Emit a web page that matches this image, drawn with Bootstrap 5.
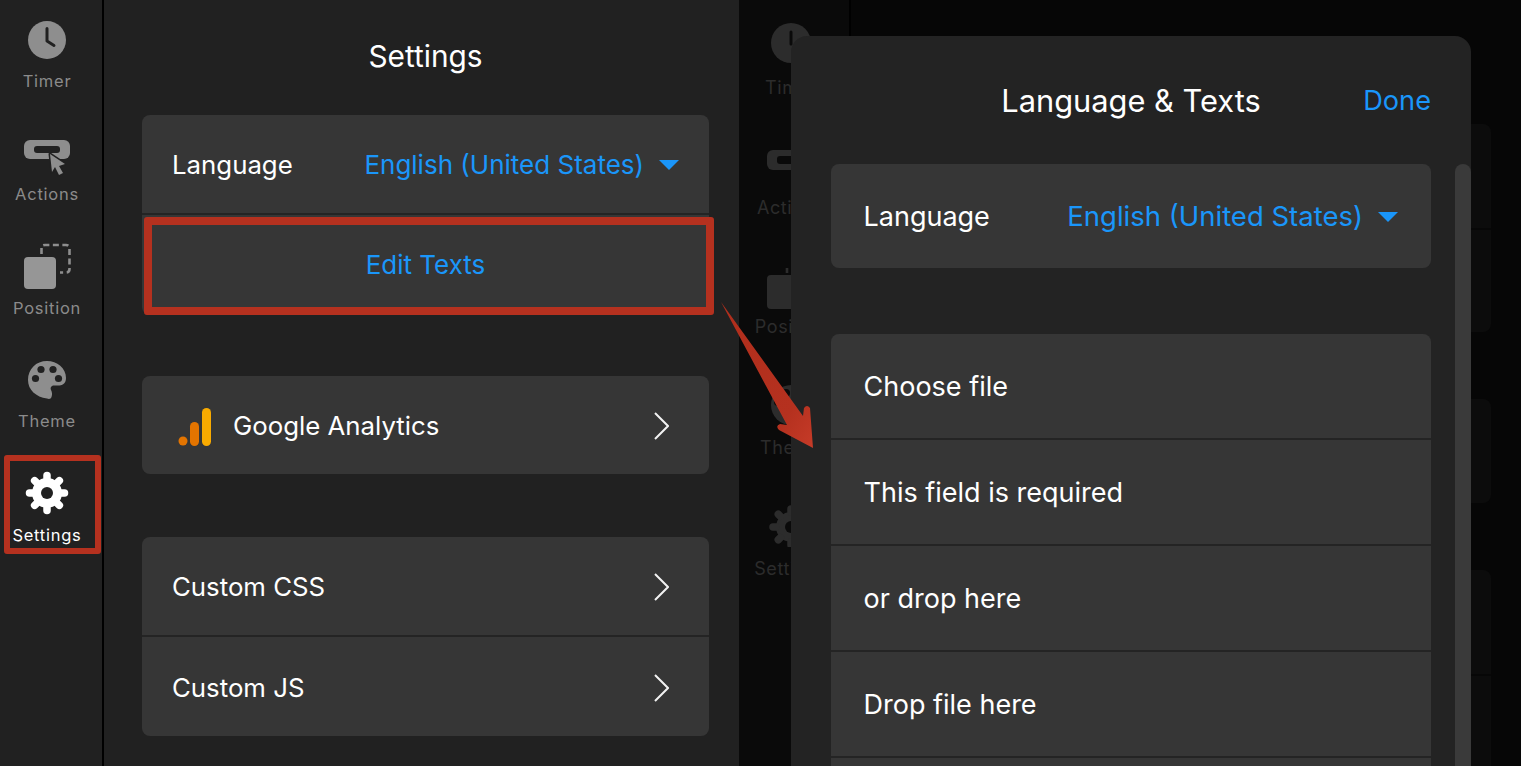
<!DOCTYPE html>
<html lang="en">
<head>
<meta charset="utf-8">
<title>Language &amp; Texts</title>
<link href="https://cdn.jsdelivr.net/npm/bootstrap@5.3.0/dist/css/bootstrap.min.css" rel="stylesheet">
<style>
html,body{height:100%;margin:0;background:#0a0a0a;overflow:hidden}
body{font-family:Inter,"Liberation Sans",sans-serif;color:#fff}
.sk-root{position:relative;width:1521px;height:766px;overflow:hidden}
.sk-rail{width:104px;height:766px;background:#212121;border-right:2px solid #000;flex:none;padding-right:8px}
.sk-item{height:113.5px;color:#8b8b8b;font-size:16.5px;letter-spacing:.75px;line-height:20px;white-space:nowrap}
.sk-item.sk-first{height:90.75px}
.sk-item svg{display:block}
.sk-item.sk-on{color:#fff}
.sk-i6{margin-bottom:6px}.sk-i7{margin-bottom:7px}.sk-i10{margin-bottom:10px}.sk-i11{margin-bottom:11px}
.sk-panel{width:635px;height:766px;background:#212121;padding:0 30px 0 38px;flex:none}
.sk-title{height:115px;font-size:29.800px;line-height:112px;text-align:center;margin-left:-8px;margin-right:-8px}
.sk-group{background:#363636;border-radius:8px;overflow:hidden;font-size:25.800px;line-height:32px}
.sk-row{height:98px;padding:2px 30px 0}
.sk-row+.sk-row{border-top:2px solid #242424;height:101px}
.sk-row.sk-tall{height:102px;padding-top:0}
.sk-row.sk-chev{padding-right:40px}
.sk-ga{margin-right:21px}
.sk-gap1{height:61px}
.sk-gap2{height:63px}
.sk-blue{color:#1a96fa}
.sk-lang{font-size:26px;gap:15px}
.sk-edit{font-size:26px}
.sk-caret{width:0;height:0;border-left:10px solid transparent;border-right:10px solid transparent;border-top:10px solid #1a96fa;display:block}
.sk-dim{flex:1;height:766px;background:#0a0a0a;position:relative}
.sk-grail{width:112px;height:766px;border-right:2px solid #000;padding:23px 6px 0 0;color:#2c2c2c;font-size:18px;letter-spacing:.6px;line-height:27px;flex:none}
.sk-gitem{height:120px;width:104px;white-space:nowrap}
.sk-gitem svg{display:block}
.sk-g11{margin-bottom:11px}.sk-g2{margin-bottom:2px}.sk-g7{margin-bottom:7px}.sk-g8{margin-bottom:8px}
.sk-gpanel{flex:1;padding:124px 30px 0 38px;background:#060606}
.sk-gcard{background:#0c0c0c;border-radius:8px}
.sk-gcard>div{height:104px}
.sk-gcard>div+div{border-top:2px solid #070707}
.sk-ggap{height:67px}
.sk-modal{position:absolute;left:52px;top:36px;width:680px;height:760px;background:#232323;border-radius:16px 16px 0 0;padding:0 40px}
.sk-mhead{height:128px;font-size:30.800px;line-height:130px;text-align:center;position:relative}
.sk-done{position:absolute;right:0;top:0;font-size:27.200px;line-height:129px}
.sk-mgroup{background:#363636;border-radius:8px;font-size:27px;width:600px;overflow:hidden}
.sk-mrow{height:104px;padding:2px 33px 0 32.500px}
.sk-mrow+.sk-mrow{height:106px;border-top:2px solid #242424}
.sk-mgap{height:66px}
.sk-mlang{font-size:27.500px;gap:15px}
.sk-scroll{position:absolute;right:0;top:128px;bottom:0;width:16px;background:#3a3a3a;border-radius:8px 8px 0 0}
.sk-mark{position:absolute;border-style:solid;border-color:#b5311f;border-radius:3px;pointer-events:none}
.sk-mark1{left:4px;top:455px;width:97px;height:99px;border-width:6px}
.sk-mark2{left:144px;top:217px;width:570px;height:98px;border-width:8px}
.sk-arrow{position:absolute;left:715px;top:295px;width:105px;height:160px}
</style>
</head>
<body>
<div class="sk-root d-flex">
  <nav class="sk-rail d-flex flex-column">
    <div class="sk-item sk-first d-flex flex-column align-items-center justify-content-end">
      <svg width="40" height="40" viewBox="0 0 40 40" class="sk-i11"><circle cx="20" cy="20" r="19" fill="#8e8e8e"/><path d="M20 8.500V21L27 25.500" fill="none" stroke="#212121" stroke-width="3" stroke-linecap="round" stroke-linejoin="round"/></svg>
      <span>Timer</span>
    </div>
    <div class="sk-item d-flex flex-column align-items-center justify-content-end">
      <svg width="48" height="38" viewBox="0 0 48 38" class="sk-i6"><rect x="1" y="0" width="46" height="19" rx="6" fill="#8e8e8e"/><rect x="11" y="6" width="26" height="7" rx="3" fill="#212121"/><path d="M27 14L42 24L36 26L40 33L36 35L32 27L29 32Z" fill="#8e8e8e" stroke="#212121" stroke-width="3" stroke-linejoin="round" paint-order="stroke"/></svg>
      <span>Actions</span>
    </div>
    <div class="sk-item d-flex flex-column align-items-center justify-content-end">
      <svg width="48" height="48" viewBox="0 0 48 48" class="sk-i7"><path d="M18.500 11V5Q18.500 2 22 2H43Q46.500 2 46.500 6V26Q46.500 29.500 43 29.500H37" fill="none" stroke="#8e8e8e" stroke-width="2.600" stroke-dasharray="6 3.500"/><rect x="1" y="14" width="32" height="32" rx="4" fill="#969696"/></svg>
      <span>Position</span>
    </div>
    <div class="sk-item d-flex flex-column align-items-center justify-content-end">
      <svg width="40" height="40" viewBox="0 0 40 40" class="sk-i11"><path d="M20 1C30 1 39 8 39 18C39 24 35 25.500 31 25.500H27C24 25.500 23 28 24 30C25 32 25.500 34 24.500 37C24 39 22 39.500 20 38.500C9 37 1 30 1 20C1 9 9 1 20 1Z" fill="#8e8e8e"/><circle cx="14" cy="9.500" r="3.600" fill="#212121"/><circle cx="26" cy="9.500" r="3.600" fill="#212121"/><circle cx="8.500" cy="18.500" r="3.600" fill="#212121"/><circle cx="31.500" cy="18.500" r="3.600" fill="#212121"/></svg>
      <span>Theme</span>
    </div>
    <div class="sk-item sk-on d-flex flex-column align-items-center justify-content-end">
      <svg width="44" height="44" viewBox="-22 -22 44 44" class="sk-i10"><circle r="15" fill="#fff"/><g stroke="#fff" stroke-width="7.500" stroke-linecap="round"><path d="M0-15V-17.500"/><path d="M0-15V-17.500" transform="rotate(45)"/><path d="M0-15V-17.500" transform="rotate(90)"/><path d="M0-15V-17.500" transform="rotate(135)"/><path d="M0-15V-17.500" transform="rotate(180)"/><path d="M0-15V-17.500" transform="rotate(225)"/><path d="M0-15V-17.500" transform="rotate(270)"/><path d="M0-15V-17.500" transform="rotate(315)"/></g><circle r="6" fill="#212121"/></svg>
      <span>Settings</span>
    </div>
  </nav>

  <main class="sk-panel">
    <div class="sk-title">Settings</div>
    <div class="sk-group">
      <div class="sk-row d-flex align-items-center justify-content-between"><span>Language</span><span class="sk-blue sk-lang d-flex align-items-center">English (United States)<i class="sk-caret"></i></span></div>
      <div class="sk-row sk-tall sk-edit d-flex align-items-center justify-content-center sk-blue">Edit Texts</div>
    </div>
    <div class="sk-gap1"></div>
    <div class="sk-group">
      <div class="sk-row sk-chev d-flex align-items-center justify-content-between">
        <span class="d-flex align-items-center">
          <svg width="40" height="40" viewBox="0 0 40 40" class="sk-ga"><circle cx="11" cy="35" r="4.500" fill="#e37400"/><rect x="18" y="16" width="9" height="24" rx="4.500" fill="#e37400"/><rect x="30" y="2" width="9" height="38" rx="4.500" fill="#f9ab00"/></svg>
          Google Analytics</span>
        <svg width="16" height="28" viewBox="0 0 16 28"><path d="M2 1L15 14L2 27" fill="none" stroke="#f2f2f2" stroke-width="2"/></svg>
      </div>
    </div>
    <div class="sk-gap2"></div>
    <div class="sk-group">
      <div class="sk-row sk-chev d-flex align-items-center justify-content-between"><span>Custom CSS</span><svg width="16" height="28" viewBox="0 0 16 28"><path d="M2 1L15 14L2 27" fill="none" stroke="#f2f2f2" stroke-width="2"/></svg></div>
      <div class="sk-row sk-chev d-flex align-items-center justify-content-between"><span>Custom JS</span><svg width="16" height="28" viewBox="0 0 16 28"><path d="M2 1L15 14L2 27" fill="none" stroke="#f2f2f2" stroke-width="2"/></svg></div>
    </div>
  </main>

  <section class="sk-dim d-flex">
    <div class="sk-grail">
      <div class="sk-gitem d-flex flex-column align-items-center ms-auto me-auto">
        <svg width="40" height="40" viewBox="0 0 40 40" class="sk-g11"><circle cx="20" cy="20" r="20" fill="#2c2c2c"/><path d="M20 9V21" stroke="#0a0a0a" stroke-width="3" stroke-linecap="round"/></svg>
        <span>Timer</span>
      </div>
      <div class="sk-gitem d-flex flex-column align-items-center ms-auto me-auto">
        <svg width="48" height="40" viewBox="0 0 48 40" class="sk-g11"><rect x="0" y="7" width="48" height="20" rx="6" fill="#2c2c2c"/><rect x="10" y="13" width="28" height="8" rx="3" fill="#0a0a0a"/></svg>
        <span>Actions</span>
      </div>
      <div class="sk-gitem d-flex flex-column align-items-center ms-auto me-auto">
        <svg width="48" height="48" viewBox="0 0 48 48" class="sk-g2"><path d="M20 10V3" fill="none" stroke="#2c2c2c" stroke-width="2.600" stroke-dasharray="5 3"/><rect x="0" y="12" width="34" height="34" rx="4" fill="#2c2c2c"/></svg>
        <span>Position</span>
      </div>
      <div class="sk-gitem d-flex flex-column align-items-center ms-auto me-auto">
        <svg width="40" height="44" viewBox="0 0 40 44" class="sk-g7"><circle cx="20" cy="22" r="20" fill="#2c2c2c"/><circle cx="7" cy="19" r="4" fill="#0a0a0a"/><circle cx="15" cy="10" r="4" fill="#0a0a0a"/></svg>
        <span>Theme</span>
      </div>
      <div class="sk-gitem d-flex flex-column align-items-center ms-auto me-auto">
        <svg width="44" height="44" viewBox="-22 -24 44 44" class="sk-g8"><circle r="15" fill="#2c2c2c"/><g stroke="#2c2c2c" stroke-width="7.500" stroke-linecap="round"><path d="M0-15V-18"/><path d="M0-15V-18" transform="rotate(-45)"/><path d="M0-15V-18" transform="rotate(-90)"/><path d="M0-15V-18" transform="rotate(-135)"/><path d="M0-15V-18" transform="rotate(180)"/></g><circle r="6" fill="#0a0a0a"/></svg>
        <span>Settings</span>
      </div>
    </div>
    <div class="sk-gpanel">
      <div class="sk-gcard"><div></div><div></div></div>
      <div class="sk-ggap"></div>
      <div class="sk-gcard"><div></div></div>
      <div class="sk-ggap"></div>
      <div class="sk-gcard"><div></div><div></div></div>
    </div>

    <div class="sk-modal">
      <div class="sk-mhead">Language &amp; Texts<span class="sk-done sk-blue">Done</span></div>
      <div class="sk-mgroup"><div class="sk-mrow d-flex align-items-center justify-content-between"><span>Language</span><span class="sk-blue sk-mlang d-flex align-items-center">English (United States)<i class="sk-caret"></i></span></div></div>
      <div class="sk-mgap"></div>
      <div class="sk-mgroup">
        <div class="sk-mrow d-flex align-items-center">Choose file</div>
        <div class="sk-mrow d-flex align-items-center">This field is required</div>
        <div class="sk-mrow d-flex align-items-center">or drop here</div>
        <div class="sk-mrow d-flex align-items-center">Drop file here</div>
        <div class="sk-mrow d-flex align-items-center"></div>
      </div>
      <div class="sk-scroll"></div>
    </div>
  </section>

  <div class="sk-mark sk-mark1"></div>
  <div class="sk-mark sk-mark2"></div>
  <svg class="sk-arrow" viewBox="715 295 105 160"><defs><linearGradient id="skg" x1="0" y1="0" x2="1" y2="1"><stop offset="0" stop-color="#b02e1c"/><stop offset=".75" stop-color="#b5311f"/><stop offset="1" stop-color="#c63b28"/></linearGradient></defs><path d="M721 302L803 416L804 408Q807 404 810 408L813 448L779 430Q775 426 780 424L787 425Z" fill="url(#skg)"/></svg>
</div>
</body>
</html>
